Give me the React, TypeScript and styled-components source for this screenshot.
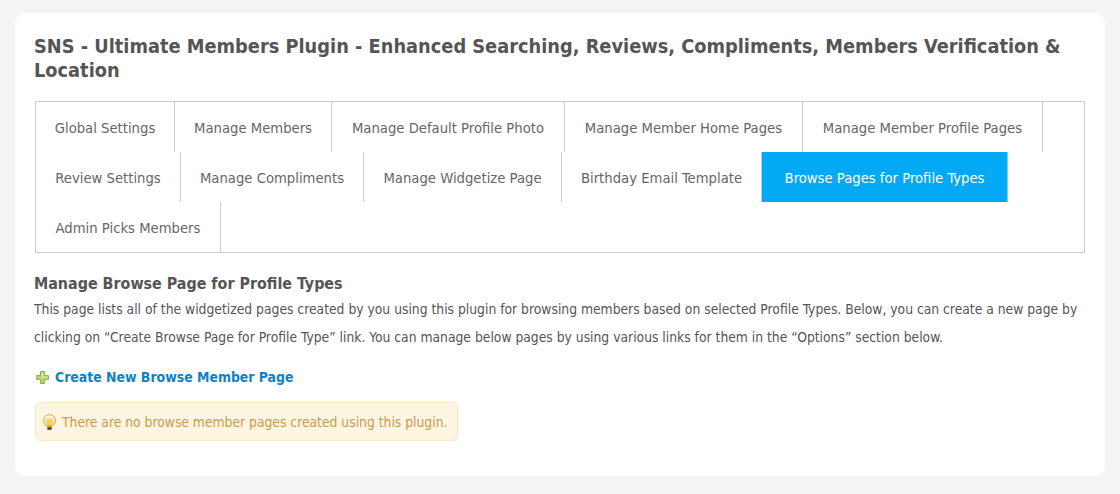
import React from "react";
import styled, { createGlobalStyle } from "styled-components";

const Global = createGlobalStyle`
  html, body { margin: 0; padding: 0; background: #f4f4f4; }
  body { font-family: "DejaVu Sans Condensed", "DejaVu Sans", sans-serif; }
`;
const Page = styled.div`
  padding: 13px 15px 18px;
  height: 494px;
  box-sizing: border-box;
  overflow: hidden;
`;
const Card = styled.div`
  background: #fff;
  border-radius: 10px;
  height: 463px;
  box-sizing: border-box;
  padding: 22px 20px 0 19px;
`;
const Title = styled.h1`
  margin: 0 0 18px;
  font-size: 19.8px;
  line-height: 24px;
  font-weight: 700;
  color: #555;
`;
const Tabs = styled.ul`
  list-style: none;
  margin: 0 0 0 1px;
  padding: 0;
  border: 1px solid #ccc;
  display: flex;
  flex-wrap: wrap;
  height: 152px;
  box-sizing: border-box;
  align-content: flex-start;
`;
const Tab = styled.li<{ $active?: boolean; $w: number }>`
  width: ${(p) => p.$w}px;
  height: 50px;
  box-sizing: border-box;
  text-align: center;
  line-height: 52px;
  font-size: 14.7px;
  white-space: nowrap;
  color: ${(p) => (p.$active ? "#fff" : "#666")};
  background: ${(p) => (p.$active ? "#03a9f4" : "transparent")};
  border-right: 1px solid ${(p) => (p.$active ? "#7fd0f5" : "#ccc")};
`;
const Heading = styled.h3`
  margin: 21px 0 0;
  font-size: 15.9px;
  line-height: 20px;
  font-weight: 700;
  color: #555;
`;
const Para = styled.p`
  margin: 1px 0 0;
  font-size: 13.75px;
  line-height: 28px;
  color: #555;
`;
const CreateLink = styled.a`
  display: flex;
  align-items: center;
  gap: 6px;
  margin: 16px 0 0 2px;
  height: 20px;
  font-size: 13.9px;
  font-weight: 700;
  color: #0d82c8;
`;
const Notice = styled.div`
  display: inline-flex;
  align-items: center;
  gap: 5px;
  margin: 15px 0 0 1px;
  height: 39px;
  box-sizing: border-box;
  padding: 0 10px 0 6px;
  background: #fcf5e1;
  border: 1px solid #f9e8c2;
  border-radius: 5px;
  font-size: 13.75px;
  color: #c99a4f;
`;

const Plus = () => (
  <svg width="13" height="13" viewBox="0 0 13 13">
    <path d="M4.5.5h4v4h4v4h-4v4h-4v-4h-4v-4h4z" fill="#b5d572" stroke="#90b24d" strokeWidth="1" />
    <path d="M5.5 1.5h2v4h4v1h-4v1h-2z" fill="#d3e8a0" />
  </svg>
);
const Bulb = () => (
  <svg width="15" height="16" viewBox="0 0 15 16">
    <path d="M7.5.7a6 6 0 0 0-3.3 11h6.6A6 6 0 0 0 7.5.7z" fill="#fdf4d2" stroke="#d8a24e" />
    <path d="M7.5 4.5a3.5 3.5 0 0 0-2 6.5h4a3.5 3.5 0 0 0-2-6.5z" fill="#fbd257" />
    <rect x="4.8" y="11.5" width="5.4" height="1.7" fill="#e0a92e" />
    <rect x="5.2" y="13" width="4.6" height="3" rx="1" fill="#555" />
  </svg>
);

const tabs: { label: string; w: number; active?: boolean }[] = [
  { label: "Global Settings", w: 139 },
  { label: "Manage Members", w: 157 },
  { label: "Manage Default Profile Photo", w: 233 },
  { label: "Manage Member Home Pages", w: 238 },
  { label: "Manage Member Profile Pages", w: 240 },
  { label: "Review Settings", w: 145 },
  { label: "Manage Compliments", w: 183 },
  { label: "Manage Widgetize Page", w: 198 },
  { label: "Birthday Email Template", w: 200 },
  { label: "Browse Pages for Profile Types", w: 246, active: true },
  { label: "Admin Picks Members", w: 185 },
];

export default function App() {
  return (
    <Page>
      <Global />
      <Card>
        <Title>SNS - Ultimate Members Plugin - Enhanced Searching, Reviews, Compliments, Members Verification &amp; Location</Title>
        <Tabs>
          {tabs.map((t) => (
            <Tab key={t.label} $w={t.w} $active={t.active}>{t.label}</Tab>
          ))}
        </Tabs>
        <Heading>Manage Browse Page for Profile Types</Heading>
        <Para>
          This page lists all of the widgetized pages created by you using this plugin for browsing members based on selected Profile Types. Below, you can create a new page by clicking on “Create Browse Page for Profile Type” link. You can manage below pages by using various links for them in the “Options” section below.
        </Para>
        <CreateLink><Plus />Create New Browse Member Page</CreateLink>
        <Notice><Bulb />There are no browse member pages created using this plugin.</Notice>
      </Card>
    </Page>
  );
}
